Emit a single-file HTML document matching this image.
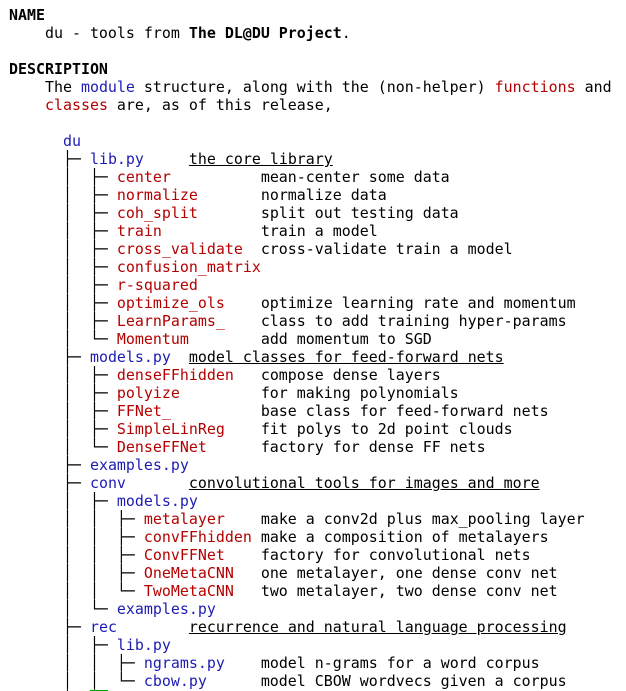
<!DOCTYPE html>
<html><head><meta charset="utf-8"><style>
html,body{margin:0;padding:0;background:#fff;width:626px;height:691px;overflow:hidden}
pre{margin:0;padding:6px 0 0 9px;font-family:"DejaVu Sans Mono","Liberation Mono",monospace;font-size:14.95px;line-height:18px;color:#000}
.b{color:#1c1cb4}.r{color:#b40000}.u{text-decoration:underline}
</style></head><body><pre><b>NAME</b>
    du - tools from <b>The DL@DU Project</b>.

<b>DESCRIPTION</b>
    The <span class="b">module</span> structure, along with the (non-helper) <span class="r">functions</span> and
    <span class="r">classes</span> are, as of this release,

      <span class="b">du</span>
      ├─ <span class="b">lib.py</span>     <span class="u">the core library</span>
      │  ├─ <span class="r">center</span>          mean-center some data
      │  ├─ <span class="r">normalize</span>       normalize data
      │  ├─ <span class="r">coh_split</span>       split out testing data
      │  ├─ <span class="r">train</span>           train a model
      │  ├─ <span class="r">cross_validate</span>  cross-validate train a model
      │  ├─ <span class="r">confusion_matrix</span>
      │  ├─ <span class="r">r-squared</span>
      │  ├─ <span class="r">optimize_ols</span>    optimize learning rate and momentum
      │  ├─ <span class="r">LearnParams_</span>    class to add training hyper-params
      │  └─ <span class="r">Momentum</span>        add momentum to SGD
      ├─ <span class="b">models.py</span>  <span class="u">model classes for feed-forward nets</span>
      │  ├─ <span class="r">denseFFhidden</span>   compose dense layers
      │  ├─ <span class="r">polyize</span>         for making polynomials
      │  ├─ <span class="r">FFNet_</span>          base class for feed-forward nets
      │  ├─ <span class="r">SimpleLinReg</span>    fit polys to 2d point clouds
      │  └─ <span class="r">DenseFFNet</span>      factory for dense FF nets
      ├─ <span class="b">examples.py</span>
      ├─ <span class="b">conv</span>       <span class="u">convolutional tools for images and more</span>
      │  ├─ <span class="b">models.py</span>
      │  │  ├─ <span class="r">metalayer</span>    make a conv2d plus max_pooling layer
      │  │  ├─ <span class="r">convFFhidden</span> make a composition of metalayers
      │  │  ├─ <span class="r">ConvFFNet</span>    factory for convolutional nets
      │  │  ├─ <span class="r">OneMetaCNN</span>   one metalayer, one dense conv net
      │  │  └─ <span class="r">TwoMetaCNN</span>   two metalayer, two dense conv net
      │  └─ <span class="b">examples.py</span>
      ├─ <span class="b">rec</span>        <span class="u">recurrence and natural language processing</span>
      │  ├─ <span class="b">lib.py</span>
      │  │  ├─ <span class="b">ngrams.py</span>    model n-grams for a word corpus
      │  │  └─ <span class="b">cbow.py</span>      model CBOW wordvecs given a corpus
      │  <span style="color:#0a0">▔▔</span>
</pre></body></html>
